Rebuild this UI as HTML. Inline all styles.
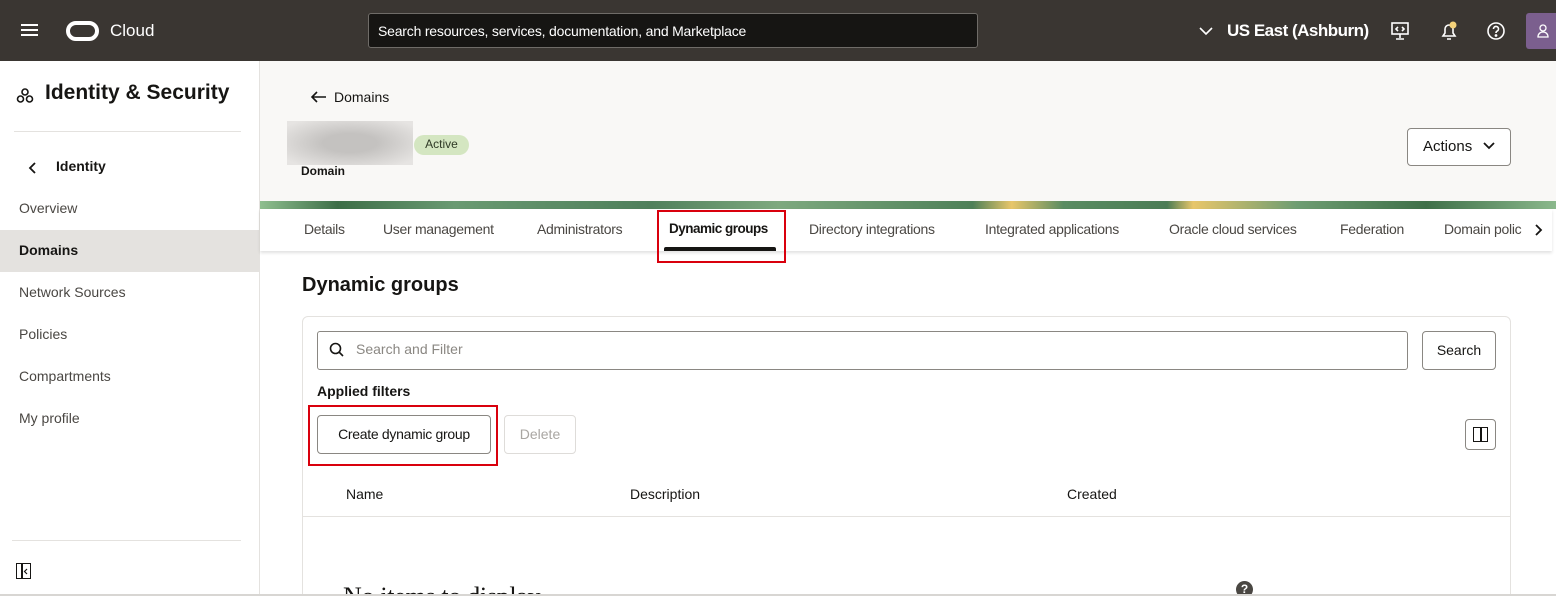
<!DOCTYPE html>
<html style="width:1556px;height:596px;overflow:hidden"><head><meta charset="utf-8"><style>
*{margin:0;padding:0;box-sizing:border-box}
body{width:1556px;height:596px;overflow:hidden;font-family:"Liberation Sans",sans-serif;color:#161513;background:#fff;position:relative}
.a{position:absolute}
.top{left:0;top:0;width:1556px;height:61px;background:#3a3632}
.side{left:0;top:61px;width:260px;height:535px;background:#fff;border-right:1px solid #e4e2df}
.nav{left:19px;font-size:14px;color:#4a4743}
.hdr{left:260px;top:61px;width:1296px;height:140px;background:#f9f8f6}
.tabs{left:260px;top:209px;width:1292px;height:42px;background:#fff;box-shadow:0 2px 3px rgba(0,0,0,.12)}
.tab{top:221px;font-size:14px;color:#4a4743;white-space:nowrap;letter-spacing:-0.3px}
.btn{border:1px solid #8a8782;border-radius:4px;background:#fff;font-size:14px;text-align:center}
</style></head><body>
<div class="a top"></div>
<div class="a" style="left:21px;top:24px;width:17px;height:2px;background:#fff;box-shadow:0 5px 0 #fff,0 10px 0 #fff"></div>
<div class="a" style="left:66px;top:21px;width:33px;height:20px;border:4px solid #fff;border-radius:10px"></div>
<div class="a" style="left:110px;top:21px;font-size:17px;color:#fff">Cloud</div>
<div class="a" style="left:368px;top:13px;width:610px;height:35px;background:#161513;border:1px solid #6f6c68;border-radius:3px;color:#fff;font-size:14px;padding:9px 9px;letter-spacing:-0.2px">Search resources, services, documentation, and Marketplace</div>
<svg class="a" style="left:1198px;top:24px" width="16" height="14"><path d="M2 4l6 6 6-6" stroke="#fff" stroke-width="1.6" fill="none"/></svg>
<div class="a" style="left:1227px;top:21px;font-size:17px;font-weight:bold;color:#fff;letter-spacing:-0.5px">US East (Ashburn)</div>
<svg class="a" style="left:1390px;top:21px" width="20" height="20" fill="none" stroke="#fff" stroke-width="1.6"><rect x="2" y="2" width="16" height="11"/><path d="M10 13v4M6 18h8M8 6l-2 2 2 2M12 6l2 2-2 2"/></svg>
<svg class="a" style="left:1438px;top:20px" width="22" height="22" fill="none" stroke="#fff" stroke-width="1.6"><path d="M5 16h12l-2-3V9a4 4 0 0 0-8 0v4zM9 19h4"/><circle cx="15" cy="5" r="3.5" fill="#f4d27a" stroke="none"/></svg>
<svg class="a" style="left:1486px;top:21px" width="20" height="20" fill="none" stroke="#fff" stroke-width="1.6"><circle cx="10" cy="10" r="8"/><path d="M7.5 8a2.5 2.5 0 1 1 3.5 2.2c-.8.4-1 1-1 1.8"/><circle cx="10" cy="14.5" r=".6" fill="#fff"/></svg>
<div class="a" style="left:1526px;top:13px;width:30px;height:36px;background:#7b5f8e;border-radius:3px 0 0 3px"></div>
<svg class="a" style="left:1536px;top:23px" width="14" height="16" fill="none" stroke="#fff" stroke-width="1.3"><circle cx="7" cy="5" r="3"/><path d="M2 14c0-3 2-5 5-5s5 2 5 5z"/></svg>

<div class="a side"></div>
<svg class="a" style="left:15px;top:87px" width="20" height="18" fill="none" stroke="#161513" stroke-width="1.6"><circle cx="10" cy="5" r="3"/><circle cx="5.5" cy="12" r="3"/><circle cx="14.5" cy="12" r="3"/></svg>
<div class="a" style="left:45px;top:81px;font-size:21px;font-weight:bold">Identity &amp; Security</div>
<div class="a" style="left:14px;top:131px;width:227px;height:1px;background:#e4e2df"></div>
<svg class="a" style="left:28px;top:161px" width="10" height="14"><path d="M7 2L2 7l5 5" stroke="#161513" stroke-width="1.8" fill="none"/></svg>
<div class="a" style="left:56px;top:158px;font-size:14px;font-weight:bold">Identity</div>
<div class="a nav" style="top:200px">Overview</div>
<div class="a" style="left:0;top:230px;width:259px;height:42px;background:#e4e2df"></div>
<div class="a nav" style="top:242px;color:#161513;font-weight:bold">Domains</div>
<div class="a nav" style="top:284px">Network Sources</div>
<div class="a nav" style="top:326px">Policies</div>
<div class="a nav" style="top:368px">Compartments</div>
<div class="a nav" style="top:410px">My profile</div>
<div class="a" style="left:12px;top:540px;width:229px;height:1px;background:#e4e2df"></div>
<div class="a" style="left:16px;top:563px;width:15px;height:16px;border:1.5px solid #161513"></div>
<div class="a" style="left:21px;top:563px;width:1.5px;height:16px;background:#161513"></div>
<svg class="a" style="left:23px;top:568px" width="6" height="7"><path d="M4 1L1.5 3.5 4 6" stroke="#161513" stroke-width="1.2" fill="none"/></svg>

<div class="a hdr"></div>
<svg class="a" style="left:310px;top:90px" width="17" height="14"><path d="M16 7H2M7 2L2 7l5 5" stroke="#161513" stroke-width="1.6" fill="none"/></svg>
<div class="a" style="left:334px;top:89px;font-size:14px">Domains</div>
<div class="a" style="left:287px;top:121px;width:126px;height:44px;background:radial-gradient(ellipse at center,#c4c2c0 30%,#e6e4e2 90%)"></div>
<div class="a" style="left:414px;top:135px;width:55px;height:20px;border-radius:10px;background:#d4e6c1;font-size:12px;text-align:center;line-height:19px;color:#2f3a26">Active</div>
<div class="a" style="left:301px;top:164px;font-size:12px;font-weight:bold">Domain</div>
<div class="a btn" style="left:1407px;top:128px;width:104px;height:38px;line-height:36px;text-align:left;padding-left:15px;font-size:15px">Actions</div>
<svg class="a" style="left:1482px;top:141px" width="14" height="10"><path d="M2 2l5 5 5-5" stroke="#161513" stroke-width="1.8" fill="none"/></svg>
<div class="a" style="left:260px;top:201px;width:1296px;height:8px;background:linear-gradient(90deg,#8fbf8f,#3d6e47 6%,#6a9a72 15%,#4f7f5b 30%,#7ea97f 40%,#4e8058 55%,#e8c66a 58%,#5a8c62 62%,#4b7c55 70%,#e8c66a 72%,#6e9d72 80%,#3f7049 90%,#8bb88c)"></div>
<div class="a tabs"></div>
<div class="a tab" style="left:304px">Details</div>
<div class="a tab" style="left:383px">User management</div>
<div class="a tab" style="left:537px">Administrators</div>
<div class="a tab" style="left:669px;color:#161513;font-weight:bold;font-size:13.5px;letter-spacing:-0.5px">Dynamic groups</div>
<div class="a" style="left:664px;top:247px;width:112px;height:4px;background:#161513;border-radius:2px 2px 0 0"></div>
<div class="a" style="left:657px;top:210px;width:129px;height:53px;border:2px solid #d9000d"></div>
<div class="a tab" style="left:809px">Directory integrations</div>
<div class="a tab" style="left:985px">Integrated applications</div>
<div class="a tab" style="left:1169px">Oracle cloud services</div>
<div class="a tab" style="left:1340px">Federation</div>
<div class="a tab" style="left:1444px;width:78px;overflow:hidden">Domain policies</div>
<div class="a" style="left:1522px;top:209px;width:30px;height:42px;background:#fff"></div>
<svg class="a" style="left:1534px;top:223px" width="10" height="14"><path d="M2 2l5 5-5 5" stroke="#161513" stroke-width="1.8" fill="none"/></svg>

<div class="a" style="left:302px;top:274px;font-size:20px;font-weight:bold">Dynamic groups</div>
<div class="a" style="left:302px;top:316px;width:1209px;height:290px;border:1px solid #e4e2df;border-radius:6px"></div>
<div class="a" style="left:317px;top:331px;width:1091px;height:39px;border:1px solid #8a8782;border-radius:3px"></div>
<svg class="a" style="left:328px;top:341px" width="18" height="18" fill="none" stroke="#161513" stroke-width="1.6"><circle cx="7.5" cy="7.5" r="5"/><path d="M11 11l4 4"/></svg>
<div class="a" style="left:356px;top:341px;font-size:14px;color:#8a8782">Search and Filter</div>
<div class="a btn" style="left:1422px;top:331px;width:74px;height:39px;line-height:37px">Search</div>
<div class="a" style="left:317px;top:383px;font-size:14px;font-weight:bold">Applied filters</div>
<div class="a btn" style="left:317px;top:415px;width:174px;height:39px;line-height:37px;letter-spacing:-0.3px">Create dynamic group</div>
<div class="a" style="left:308px;top:405px;width:190px;height:61px;border:2px solid #d9000d"></div>
<div class="a btn" style="left:504px;top:415px;width:72px;height:39px;line-height:37px;border-color:#dedcd9;color:#a9a6a2">Delete</div>
<div class="a btn" style="left:1465px;top:419px;width:31px;height:31px"></div>
<div class="a" style="left:1473px;top:427px;width:15px;height:15px;border:1.5px solid #161513"></div>
<div class="a" style="left:1480px;top:427px;width:1.5px;height:15px;background:#161513"></div>
<div class="a" style="left:346px;top:486px;font-size:14px">Name</div>
<div class="a" style="left:630px;top:486px;font-size:14px">Description</div>
<div class="a" style="left:1067px;top:486px;font-size:14px">Created</div>
<div class="a" style="left:303px;top:516px;width:1207px;height:1px;background:#e4e2df"></div>
<div class="a" style="left:343px;top:582px;font-family:'Liberation Serif',serif;font-size:26px;letter-spacing:-0.3px">No items to display</div>
<div class="a" style="left:1236px;top:581px;width:17px;height:17px;border-radius:50%;background:#4a4743;color:#fff;font-size:12px;font-weight:bold;text-align:center;line-height:17px">?</div>
<div class="a" style="left:0;top:594px;width:1556px;height:2px;background:#d8d6d3"></div>
</body></html>
